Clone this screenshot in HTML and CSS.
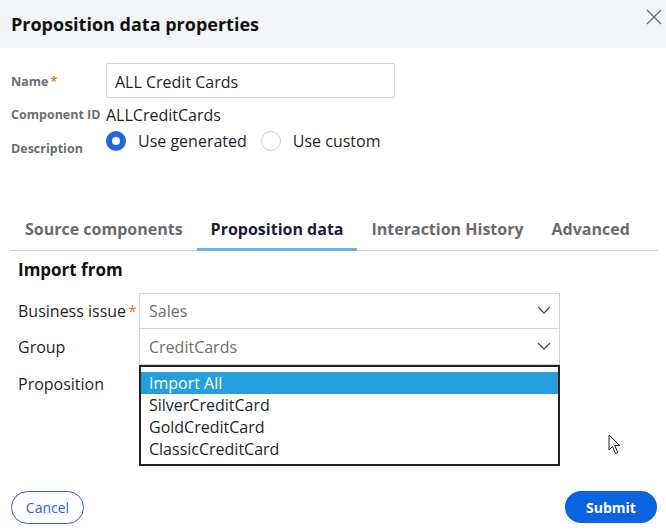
FILE: index.html
```html
<!DOCTYPE html>
<html>
<head>
<meta charset="utf-8">
<link rel="stylesheet" href="styles.css">
</head>
<body>
<div class="dialog">
  <div class="header">
    <h1 class="title">Proposition data properties</h1>
    <svg class="close" width="16" height="16" viewBox="0 0 16 16"><path d="M1 1L15 15M15 1L1 15" stroke="#6b6e78" stroke-width="1.4" fill="none"/></svg>
  </div>
  <div class="form">
    <div class="flabel name-label">Name<span class="req">*</span></div>
    <div class="input">ALL Credit Cards</div>
    <div class="flabel cid-label">Component ID</div>
    <div class="value">ALLCreditCards</div>
    <div class="flabel desc-label">Description</div>
    <div class="radios">
      <span class="radio on"></span><span class="rtext">Use generated</span>
      <span class="radio"></span><span class="rtext">Use custom</span>
    </div>
  </div>
  <div class="tabs">
    <div class="tab">Source components</div>
    <div class="tab active">Proposition data</div>
    <div class="tab">Interaction History</div>
    <div class="tab">Advanced</div>
  </div>
  <div class="panel">
    <div class="section">Import from</div>
    <div class="grid">
      <div class="glabel">Business issue<span class="req">*</span></div>
      <div class="select">Sales<svg class="chev" width="14" height="8" viewBox="0 0 14 8"><path d="M1 1L7 7L13 1" stroke="#4a4e5e" stroke-width="1.3" fill="none"/></svg></div>
      <div class="glabel">Group</div>
      <div class="select second">CreditCards<svg class="chev" width="14" height="8" viewBox="0 0 14 8"><path d="M1 1L7 7L13 1" stroke="#4a4e5e" stroke-width="1.3" fill="none"/></svg></div>
      <div class="glabel prop">Proposition</div>
      <div class="listbox">
        <div class="opt sel">Import All</div>
        <div class="opt">SilverCreditCard</div>
        <div class="opt">GoldCreditCard</div>
        <div class="opt">ClassicCreditCard</div>
      </div>
    </div>
    <svg class="cursor" width="14" height="22" viewBox="0 0 14 22"><path d="M1 1L1 16L4.5 12.5L7.5 19.5L9.8 18.5L6.8 11.6L11.8 11.6Z" fill="#fff" stroke="#222" stroke-width="1"/></svg>
  </div>
  <div class="footer">
    <button class="btn cancel">Cancel</button>
    <button class="btn submit">Submit</button>
  </div>
</div>
</body>
</html>
```
FILE: styles.css
```css
* { box-sizing: border-box; }
html, body { margin: 0; padding: 0; background: #fff; }
body {
  font-family: "Open Sans", "Noto Sans", sans-serif;
  color: #1f1f2b;
  width: 666px;
  height: 532px;
  overflow: hidden;
}
.header {
  height: 48px;
  background: #f3f4f7;
  display: flex;
  align-items: center;
  justify-content: space-between;
  padding: 0 10px 0 11px;
}
.title {
  margin: 0;
  font-size: 18px;
  font-weight: 700;
  color: #111;
  line-height: 24px;
  padding-bottom: 1px;
}
.close { margin-top: -14px; margin-right: -6px; }
.form {
  display: grid;
  grid-template-columns: 95px 289px;
  padding: 15px 0 0 11px;
}
.flabel {
  font-size: 12.5px;
  font-weight: 700;
  color: #6b6d7a;
  white-space: nowrap;
}
.req { color: #e07a1f; margin-left: 2px; }
.name-label { line-height: 32px; padding-top: 3px; }
.input {
  height: 35px;
  border: 1px solid #cfd3da;
  border-radius: 2px;
  padding: 3px 8px 0;
  font-size: 16px;
  line-height: 30px;
  color: #1f1f2b;
}
.cid-label { line-height: 22px; margin-top: 6px; }
.value { font-size: 16px; line-height: 22px; margin-top: 6px; color: #1f1f2b; }
.desc-label { line-height: 22px; padding-top: 12px; }
.radios {
  display: flex;
  align-items: center;
  height: 22px;
  margin-top: 4px;
  font-size: 16px;
}
.radio {
  width: 20px;
  height: 20px;
  border-radius: 50%;
  border: 1px solid #cdd0d6;
  background: #fff;
  margin-left: 0;
}
.radio.on {
  border: 6px solid #2166e0;
  background: #fff;
}
.rtext { margin: 0 14px 0 12px; color: #1f1f2b; }
.tabs {
  display: flex;
  margin: 47px 8px 0 11px;
  border-bottom: 1px solid #cacdd2;
}
.tab {
  padding: 11px 14px 8px;
  font-size: 16px;
  font-weight: 700;
  line-height: 22px;
  color: #6a6a6e;
  border-bottom: 3px solid transparent;
  margin-bottom: -1px;
  white-space: nowrap;
}
.tab.active {
  color: #1c1c3a;
  border-bottom-color: #6db2ea;
}
.panel {
  position: relative;
  padding: 7px 0 0 18px;
}
.section {
  font-size: 17px;
  font-weight: 700;
  line-height: 24px;
  color: #111;
}
.grid {
  display: grid;
  grid-template-columns: 121px 421px;
  margin-top: 11px;
}
.glabel {
  font-size: 16px;
  line-height: 22px;
  color: #1f1f2b;
  display: flex;
  align-items: center;
}
.glabel.prop { align-items: flex-start; padding-top: 8px; }
.select {
  height: 36px;
  border: 1px solid #cfd3da;
  padding: 0 8px 0 9px;
  font-size: 16px;
  color: #6e6f73;
  display: flex;
  align-items: center;
  justify-content: space-between;
}
.select.second { margin-top: -1px; height: 37px; }
.chev { margin-top: -2px; }
.listbox {
  border: 2px solid #222;
  padding: 5px 0 4px;
  height: 101px;
}
.opt {
  font-size: 16px;
  line-height: 22px;
  padding-left: 8px;
  color: #1f1f2b;
}
.opt.sel { background: #259fdb; color: #fff; }
.cursor { position: absolute; left: 608px; top: 183px; }
.footer {
  display: flex;
  justify-content: space-between;
  padding: 25px 9px 0 11px;
}
.btn {
  font-family: "Open Sans", "Noto Sans", sans-serif;
  font-size: 14px;
  border-radius: 17px;
  height: 33px;
  cursor: pointer;
}
.cancel {
  width: 73px;
  background: #fff;
  border: 1px solid #2b63d9;
  color: #2b63d9;
}
.submit {
  width: 92px;
  background: #0a63e0;
  border: none;
  color: #fff;
  font-weight: 700;
  height: 32px;
}
```
